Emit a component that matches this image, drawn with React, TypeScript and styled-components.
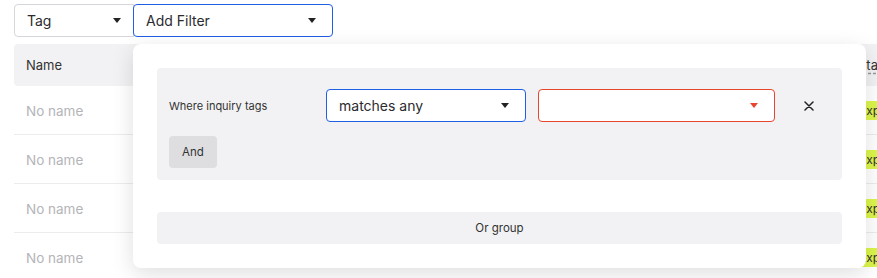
import React from 'react'
import styled, { createGlobalStyle } from 'styled-components'

const GlobalStyle = createGlobalStyle`
  html, body {
    margin: 0;
    padding: 0;
    background: #fff;
    font-family: Inter, "Noto Sans", sans-serif;
    color: #2f2f33;
    overflow: hidden;
  }
`

const Page = styled.div`
  width: 877px;
  height: 278px;
  overflow: hidden;
  padding: 4px 0 0 14px;
  box-sizing: border-box;
`

const FilterBar = styled.div`
  position: relative;
  display: flex;
  width: 319px;
`

const SelectBox = styled.div<{ $width: number; $tone?: 'plain' | 'active' | 'error'; $left?: boolean }>`
  display: flex;
  align-items: center;
  justify-content: space-between;
  box-sizing: border-box;
  width: ${(p) => p.$width}px;
  height: 33px;
  padding: 0 ${(p) => (p.$left ? 12 : 16)}px 0 12px;
  background: #fff;
  border: 1px solid
    ${(p) => (p.$tone === 'active' ? '#1f5fe6' : p.$tone === 'error' ? '#e8452f' : '#d6d6da')};
  border-radius: ${(p) => (p.$left ? '4px 0 0 4px' : p.$tone === 'plain' ? '0' : '4px')};
  font-size: 14px;
  color: #2b2b2f;
  flex-shrink: 0;
`

const Caret = styled.span<{ $color?: string }>`
  width: 0;
  height: 0;
  border-left: 4px solid transparent;
  border-right: 4px solid transparent;
  border-top: 5px solid ${(p) => p.$color ?? '#222'};
`

const Table = styled.div`
  margin-top: 7px;
  width: 900px;
`

const HeaderRow = styled.div`
  display: grid;
  grid-template-columns: 835px 1fr;
  height: 42px;
  align-items: center;
  background: #f2f2f4;
  border-radius: 4px;
  font-size: 13px;
  color: #333;
`

const HeaderCell = styled.div<{ $dashed?: boolean }>`
  padding-left: ${(p) => (p.$dashed ? 9 : 12)}px;
  span {
    text-decoration: ${(p) => (p.$dashed ? 'underline dashed #999' : 'none')};
    text-underline-offset: 3px;
  }
`

const BodyRow = styled.div`
  display: grid;
  grid-template-columns: 835px 1fr;
  height: 48px;
  align-items: center;
  border-bottom: 1px solid #ececee;
  font-size: 13.5px;
`

const NameCell = styled.div`
  padding-left: 12px;
  padding-top: 1px;
  color: #b4b4b8;
`

const StatusCell = styled.div`
  padding-left: 6px;
`

const Tag = styled.span`
  display: inline-block;
  background: #dcf64c;
  color: #333;
  font-size: 12px;
  padding: 2px 4px;
  border-radius: 2px;
`

const Popover = styled.div`
  position: absolute;
  top: 40px;
  left: 119px;
  width: 733px;
  box-sizing: border-box;
  padding: 24px;
  background: #fff;
  border-radius: 8px;
  box-shadow: 0 6px 22px rgba(0, 0, 0, 0.13);
  z-index: 2;
`

const Group = styled.div`
  background: #f2f2f4;
  border-radius: 4px;
  padding: 21px 12px 12px;
`

const ConditionRow = styled.div`
  display: flex;
  align-items: center;
  gap: 12px;
`

const Label = styled.div`
  width: 145px;
  font-size: 11px;
  color: #333;
`

const CloseButton = styled.button`
  display: flex;
  align-items: center;
  justify-content: center;
  margin-left: 10px;
  width: 24px;
  height: 24px;
  padding: 0;
  border: none;
  background: transparent;
  cursor: pointer;
`

const SoftButton = styled.button<{ $full?: boolean }>`
  display: block;
  height: 32px;
  width: ${(p) => (p.$full ? '100%' : '48px')};
  margin-top: ${(p) => (p.$full ? '32px' : '14px')};
  border: none;
  border-radius: 4px;
  background: ${(p) => (p.$full ? '#f2f2f4' : '#dedee0')};
  font-family: Inter, "Noto Sans", sans-serif;
  font-size: 11.5px;
  color: #333;
  padding: 0;
`

const rows = [0, 1, 2, 3]

const App = (): JSX.Element => {
  return (
    <>
      <GlobalStyle />
      <Page>
        <FilterBar>
          <SelectBox $width={120} $left>
            Tag
            <Caret />
          </SelectBox>
          <SelectBox $width={200} $tone="active" style={{ marginLeft: -1 }}>
            Add Filter
            <Caret />
          </SelectBox>
          <Popover>
            <Group>
              <ConditionRow>
                <Label>Where inquiry tags</Label>
                <SelectBox $width={200} $tone="active">
                  matches any
                  <Caret />
                </SelectBox>
                <SelectBox $width={237} $tone="error">
                  <span />
                  <Caret $color="#e8452f" />
                </SelectBox>
                <CloseButton aria-label="Remove">
                  <svg width="10" height="10" viewBox="0 0 10 10">
                    <path d="M1 1L9 9M9 1L1 9" stroke="#222" strokeWidth="1.5" strokeLinecap="round" />
                  </svg>
                </CloseButton>
              </ConditionRow>
              <SoftButton>And</SoftButton>
            </Group>
            <SoftButton $full>Or group</SoftButton>
          </Popover>
        </FilterBar>
        <Table>
          <HeaderRow>
            <HeaderCell>Name</HeaderCell>
            <HeaderCell $dashed>
              <span>Status</span>
            </HeaderCell>
          </HeaderRow>
          {rows.map((r) => (
            <BodyRow key={r}>
              <NameCell>No name</NameCell>
              <StatusCell>
                <Tag>Expired</Tag>
              </StatusCell>
            </BodyRow>
          ))}
        </Table>
      </Page>
    </>
  )
}

export default App
